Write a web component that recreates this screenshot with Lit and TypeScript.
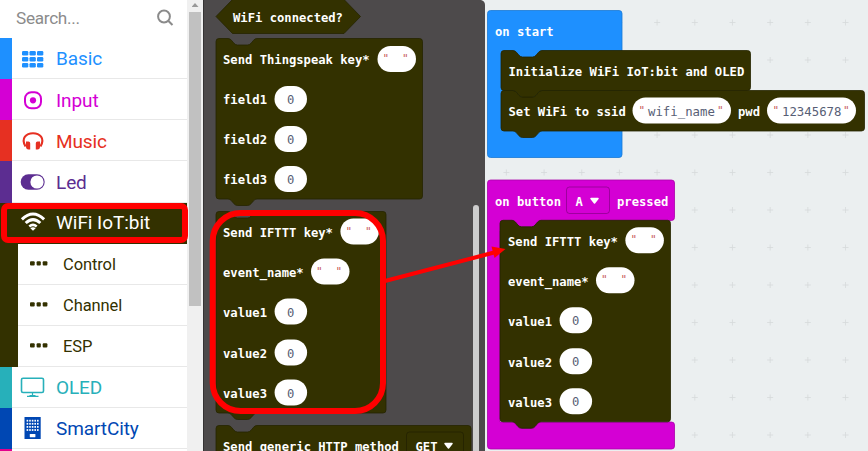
import { LitElement, html, svg, css } from "lit";
import { customElement } from "lit/decorators.js";

/* Outline of a statement block: notch on the top edge, tab on the bottom edge. */
const statement = (x: number, y: number, w: number, h: number) =>
  `M${x + 3} ${y}H${x + 12}q2 0 3.5 1.8l2.5 3q1.5 1.7 3.5 1.7h10q2 0 3.5-1.7l2.5-3q1.5-1.8 3.5-1.8H${x + w - 3}q3 0 3 3V${y + h - 3}q0 3-3 3` +
  `H${x + 41}q-2 0-3.5 1.8l-2.5 3q-1.5 1.7-3.5 1.7h-10q-2 0-3.5-1.7l-2.5-3q-1.5-1.8-3.5-1.8H${x + 3}q-3 0-3-3V${y + 3}q0-3 3-3Z`;

const block = (x: number, y: number, w: number, h: number) =>
  svg`<path class="olive" d=${statement(x, y, w, h)}></path>`;

const label = (x: number, y: number, s: string, cls = "label", cw = 7.33) =>
  svg`<text class=${cls} x=${x} y=${y} textLength=${s.length * cw} lengthAdjust="spacingAndGlyphs">${s}</text>`;

const pill = (x: number, y: number, w: number, h = 26) =>
  svg`<rect class="pill" x=${x} y=${y} width=${w} height=${h} rx="13"></rect>`;

const num = (x: number, y: number) => svg`${pill(x, y, 32.5)}${label(x + 12.5, y + 18, "0", "value")}`;

const quote = (x: number, y: number) => svg`<text class="quote" x=${x} y=${y}>"</text>`;

const empty = (x: number, y: number) =>
  svg`${pill(x, y, 38.5)}${quote(x + 5, y + 16)}${quote(x + 24.5, y + 16)}`;

const drop = (x: number, y: number, w: number, s: string) => svg`
  <rect class="drop" x=${x} y=${y} width=${w} height="26.5" rx="3"></rect>
  ${label(x + 9, y + 19, s)}
  <path class="caret" d="M${x + w - 18.5} ${y + 11.5}h7l-3.5 4.5z"></path>`;

const ifttt = (x: number, y: number, w: number, tx: number) => svg`
  ${block(x, y, w, 201.5)}
  ${label(tx, y + 25.7, "Send IFTTT key*")}${empty(tx + 117.4, y + 7)}
  ${label(tx, y + 65.7, "event_name*")}${empty(tx + 88, y + 47)}
  ${[87, 128, 168].map((dy, i) => svg`${label(tx, y + dy + 18.7, `value${i + 1}`)}${num(tx + 51.6, y + dy)}`)}`;

const icons: Record<string, unknown> = {
  grid: svg`<g fill="currentColor">${[0, 1, 2].map(r => [0, 1, 2].map(c =>
    svg`<rect x=${1 + c * 7.5} y=${4 + r * 6} width="6.3" height="4.5" rx="1.2"></rect>`))}</g>`,
  target: svg`<rect x="4" y="4.3" width="16" height="16" rx="6.3" fill="none" stroke="currentColor" stroke-width="2"></rect><circle cx="12" cy="12.3" r="3.1" fill="currentColor"></circle>`,
  phones: svg`<path d="M4.5 17.5C-.5 9 5.5 4.3 12 4.3s12.5 4.7 7.5 13.2" fill="none" stroke="currentColor" stroke-width="2.1"></path><path d="M5 12.5h2.500q1.700 0 1.700 1.700v6.300H7.500Q5 20.500 5 17.500zM19 12.500h-2.500q-1.700 0-1.700 1.700v6.300h1.700q2.500 0 2.500-3z" fill="currentColor"></path>`,
  toggle: svg`<rect x="-.3" y="4.2" width="24" height="15.5" rx="7.75" fill="currentColor"></rect><circle cx="16" cy="12" r="6.6" fill="#fff"></circle>`,
  wifi: svg`<g fill="none" stroke="currentColor" stroke-width="3"><path d="M.9 9.3Q12-1.300 23.100 9.300"></path><path d="M4.700 13q7.300-6.800 14.600 0"></path><path d="M8.300 16.500q3.700-3.300 7.400 0" stroke-width="2.500"></path></g><path d="M9.300 18.200q2.700-2 5.400 0L12 20.700z" fill="currentColor"></path>`,
  screen: svg`<g fill="none" stroke="currentColor" stroke-width="1.6"><rect x=".5" y="3.3" width="22" height="14.200" rx="1.500"></rect><path d="M11.500 17.500v3M8.500 20.500h6M6 21.400h11.500" stroke-width="1.200"></path></g>`,
  tower: svg`<path d="M3.500 1h16.200v22H3.500z" fill="currentColor"></path><g fill="#fff">${[0, 1, 2, 3].map(r => [0, 1, 2, 3, 4].map(c =>
    svg`<rect x=${5.6 + c * 2.6} y=${3.8 + r * 3.1} width="1.600" height="1.800"></rect>`))}<rect x="8.800" y="18" width="5.600" height="3.300" rx=".6"></rect></g>`,
  dots: svg`<g fill="currentColor"><rect x="0" y="9.3" width="4.700" height="4.300" rx="1"></rect><rect x="6.600" y="9.300" width="4.200" height="4.300" rx="1"></rect><rect x="12.700" y="9.300" width="4.700" height="4.300" rx="1"></rect></g>`,
};

const rows = [
  { name: "Basic", cls: "basic", icon: "grid" },
  { name: "Input", cls: "input", icon: "target" },
  { name: "Music", cls: "music", icon: "phones" },
  { name: "Led", cls: "led", icon: "toggle" },
  { name: "WiFi IoT:bit", cls: "active", icon: "wifi" },
  { name: "Control", cls: "sub", icon: "dots" },
  { name: "Channel", cls: "sub", icon: "dots" },
  { name: "ESP", cls: "sub", icon: "dots" },
  { name: "OLED", cls: "oled", icon: "screen" },
  { name: "SmartCity", cls: "city", icon: "tower" },
  { name: "", cls: "more", icon: "" },
];

@customElement("toolbox-panel")
class ToolboxPanel extends LitElement {
  static styles = css`
    :host { display: flex; width: 203px; height: 451px; overflow: hidden; font-family: Roboto, sans-serif; background: #fff; }
    .list { width: 187px; flex: none; }
    .search { height: 38.2px; box-sizing: border-box; display: flex; justify-content: space-between; padding: 0 13px 3px 16px; align-items: center; color: #8b8b8b; font-size: 17.2px; letter-spacing: -0.3px; }
    .search svg { width: 18px; height: 18px; }
    .row { height: 41.1px; box-sizing: border-box; display: flex; align-items: center; border-left: 12px solid var(--c); color: var(--c); font-size: 19px; padding-left: 9px; box-shadow: inset 0 -1px #e8e8e8; letter-spacing: -0.1px; white-space: nowrap; }
    .row span { padding-top: 0.4px; }
    .row svg { width: 24px; height: 24px; flex: none; margin-right: 11px; overflow: visible; }
    .basic { --c: #1e90ff; }
    .input { --c: #d400d4; }
    .music { --c: #e63022; }
    .led { --c: #5c2d91; }
    .active { --c: #333100; background: #333100; color: #fff; box-shadow: none; letter-spacing: -0.05px; }
    .active span, .active svg { margin-top: -2px; }
    .sub { --c: #333100; border-left-width: 18px; font-size: 16.5px; padding-left: 12px; }
    .sub svg { margin-right: 9px; margin-top: -1px; }
    .oled { --c: #27b0ba; }
    .city { --c: #0047b3; }
    .city svg { margin-top: -1px; }
    .more { --c: #e3008c; }
    .bar { width: 16px; background: #f0f0f0; display: flex; flex-direction: column; align-items: center; padding-top: 3px; box-sizing: border-box; }
    .arrow { width: 7px; height: 4px; background: #999; clip-path: polygon(50% 0, 100% 100%, 0 100%); margin-bottom: 5px; }
    .thumb { width: 12px; height: 294px; background: #c1c1c1; }
  `;
  render() {
    return html`
      <div class="list">
        <div class="search"><span>Search...</span>
          <svg viewBox="0 0 18 18"><g fill="none" stroke="#8b8b8b" stroke-width="2"><circle cx="8" cy="7.5" r="5.9"></circle><path d="M12.200 11.700l4.300 4.300"></path></g></svg>
        </div>
        ${rows.map(r => html`<div class="row ${r.cls}"><svg viewBox="0 0 24 24">${icons[r.icon]}</svg><span>${r.name}</span></div>`)}
      </div>
      <div class="bar"><div class="arrow"></div><div class="thumb"></div></div>`;
  }
}

@customElement("block-canvas")
class BlockCanvas extends LitElement {
  static styles = css`
    :host { display: block; width: 665px; height: 451px; }
    svg { display: block; }
    .olive { fill: #333100; stroke: #252400; stroke-width: 0.8; }
    .label { font: bold 13px "DejaVu Sans Mono", monospace; fill: #fff; }
    .value { font: 13px "DejaVu Sans Mono", monospace; fill: #575e75; }
    .quote { font: 11px "DejaVu Sans Mono", monospace; fill: #c75b5b; }
    .pill { fill: #fff; }
    .drop { fill: none; stroke: #000; stroke-opacity: 0.25; }
    .caret { fill: #fff; stroke: #fff; stroke-width: 1.5; stroke-linejoin: round; }
    .start { fill: #1e90ff; stroke: #1878d4; stroke-width: 0.8; }
    .event { fill: #d400d4; stroke: #aa00aa; stroke-width: 0.8; }
    .socket { fill: #d400d4; }
  `;
  render() {
    const marks: string[] = [];
    for (let i = 0; i < 10; i++) for (let j = 0; j < 12; j++) marks.push(`M${506.4 + i * 37.68 - 3} ${22.5 + j * 37.5}h6m-3-3v6`);
    return html`<svg width="665" height="451" viewBox="203 0 665 451">
      <rect x="203" width="665" height="451" fill="#ebeff0"></rect>
      <path d=${marks.join("")} stroke="#d5d9da" stroke-width="0.8" fill="none"></path>
      <path d="M203 0H481q4 1 4 5V451H203z" fill="#4d4a4b"></path>
      <path d="M203.500 0V451" stroke="#353334"></path>
      <path class="olive" d="M232.500-.5H344L360.500 16.500 344 33.500H232.500L216 16.500z"></path>
      ${label(233, 22, "WiFi connected?")}
      ${block(216, 38.5, 206.5, 160.5)}
      ${label(223, 64, "Send Thingspeak key*")}${empty(377.5, 46)}
      ${[0, 1, 2].map(i => svg`${label(223, 104 + i * 40, `field${i + 1}`)}${num(274.5, 86 + i * 40)}`)}
      ${ifttt(216, 211.5, 170, 223)}
      ${block(216, 425.5, 255, 60)}
      ${label(223, 451, "Send generic HTTP method")}${drop(406.5, 432, 57, "GET")}
      <path d="M476 451V208" stroke="#cdcdcd" stroke-width="6" stroke-linecap="round"></path>

      <rect class="start" x="487.5" y="10.5" width="134.5" height="147" rx="3"></rect>
      ${label(495, 36, "on start")}
      ${block(501, 90.5, 363.5, 40.5)}
      ${block(501, 50.5, 249.5, 40)}
      ${label(508.5, 76, "Initialize WiFi IoT:bit and OLED", "label", 7.37)}
      ${label(508.5, 116, "Set WiFi to ssid")}
      ${pill(632.5, 97.5, 98.5)}${quote(638.5, 114)}${label(648, 116, "wifi_name", "value", 7.43)}${quote(717, 114)}
      ${label(738, 116, "pwd")}
      ${pill(767, 97.5, 89)}${quote(772.5, 114)}${label(782, 116, "12345678", "value", 7.43)}${quote(843, 114)}

      <path class="event" d="M490.500 180H671.500q3 0 3 3V217.500q0 3-3 3H500V422H671.500q3 0 3 3V446q0 3-3 3H490.500q-3 0-3-3V183q0-3 3-3z"></path>
      <rect class="socket" x="499" y="219" width="50" height="12"></rect>
      ${label(495, 206, "on button")}${drop(566.5, 187, 43, "A")}${label(617, 206, "pressed")}
      ${ifttt(500, 220.3, 170.5, 508)}

      <rect x="212.7" y="213" width="170.3" height="198" rx="28" fill="none" stroke="red" stroke-width="6"></rect>
      <path d="M385 281L494 252.500" stroke="red" stroke-width="4"></path>
      <path d="M505.500 249L491.500 246.500 494.500 258z" fill="red"></path>
    </svg>`;
  }
}

@customElement("app-root")
class AppRoot extends LitElement {
  static styles = css`
    :host { display: flex; position: relative; width: 868px; height: 451px; overflow: hidden; }
    toolbox-panel, block-canvas { flex: none; }
    .callout { position: absolute; left: 1px; top: 203px; width: 186.5px; height: 40px; box-sizing: border-box; border: 6px solid red; border-radius: 7px; }
  `;
  render() {
    return html`<toolbox-panel></toolbox-panel><block-canvas></block-canvas><div class="callout"></div>`;
  }
}
